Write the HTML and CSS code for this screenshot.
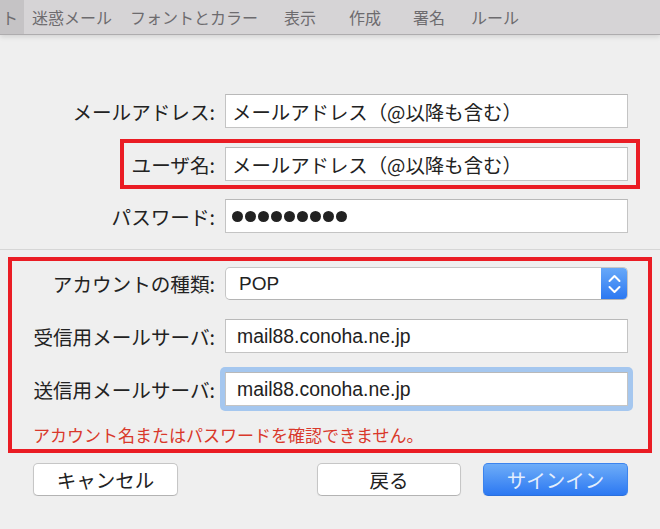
FILE: index.html
```html
<!DOCTYPE html>
<html lang="ja">
<head>
  <meta charset="UTF-8">
  <meta name="viewport" content="width=device-width, initial-scale=1.0">
  <title>アカウントを追加</title>
  <link rel="stylesheet" href="styles.css">
</head>
<body>
  <!-- 環境設定のツールバー（上半分は画面外） -->
  <div class="toolbar">
    <span class="tab tab-cut">ト</span>
    <span class="tab tab-junk">迷惑メール</span>
    <span class="tab tab-font">フォントとカラー</span>
    <span class="tab tab-view">表示</span>
    <span class="tab tab-compose">作成</span>
    <span class="tab tab-sign">署名</span>
    <span class="tab tab-rule">ルール</span>
  </div>

  <form class="account" id="accountForm">
    <div class="row">
      <label class="label" for="email">メールアドレス:</label>
      <input class="field" type="text" id="email" value="メールアドレス（@以降も含む）" readonly>
    </div>

    <div class="mark mark-user">
      <div class="row">
        <label class="label" for="user">ユーザ名:</label>
        <input class="field" type="text" id="user" value="メールアドレス（@以降も含む）" readonly>
      </div>
    </div>

    <div class="row">
      <label class="label">パスワード:</label>
      <div class="field field-dots">
        <span class="dot"></span><span class="dot"></span><span class="dot"></span>
        <span class="dot"></span><span class="dot"></span><span class="dot"></span>
        <span class="dot"></span><span class="dot"></span><span class="dot"></span>
      </div>
    </div>

    <div class="divider"></div>

    <div class="mark mark-server">
      <div class="row">
        <label class="label">アカウントの種類:</label>
        <div class="select">
          <span class="select-value">POP</span>
          <span class="stepper">
            <svg width="27" height="33" viewBox="0 0 27 33">
              <path d="M8.5 14 L13.5 9 L18.5 14" fill="none" stroke="#fff" stroke-width="2" stroke-linecap="round" stroke-linejoin="round"/>
              <path d="M8.5 20 L13.5 25 L18.5 20" fill="none" stroke="#fff" stroke-width="2" stroke-linecap="round" stroke-linejoin="round"/>
            </svg>
          </span>
        </div>
      </div>
      <div class="row row-gap">
        <label class="label" for="incoming">受信用メールサーバ:</label>
        <input class="field field-latin" type="text" id="incoming" value="mail88.conoha.ne.jp" readonly>
      </div>
      <div class="row row-gap">
        <label class="label" for="outgoing">送信用メールサーバ:</label>
        <div class="focus">
          <input class="field field-latin" type="text" id="outgoing" value="mail88.conoha.ne.jp" readonly>
        </div>
      </div>
      <p class="error">アカウント名またはパスワードを確認できません。</p>
    </div>

    <div class="buttons">
      <button type="button" class="btn btn-cancel">キャンセル</button>
      <button type="button" class="btn btn-back">戻る</button>
      <button type="submit" class="btn btn-primary">サインイン</button>
    </div>
  </form>
</body>
</html>
```

FILE: styles.css
```css
/* Estilos generales */
body {
  margin: 0;
  background: #efefef;
  font-family: "Noto Sans CJK JP", sans-serif;
  color: #222;
}

/* Barra de herramientas */
.toolbar {
  display: flex;
  align-items: center;
  height: 34px;
  background: #d6d4d6;
  border-bottom: 1px solid #aeacae;
  box-shadow: 0 2px 5px rgba(0,0,0,0.12);
  font-size: 16px;
  color: #6d6b6e;
}
.tab {
  white-space: nowrap;
  line-height: 34px;
}
.tab-cut {
  width: 22px;
  padding-left: 2px;
  background: #c5c3c5;
}
.tab-junk { margin-left: 8px; }
.tab-font { margin-left: 18px; }
.tab-view { margin-left: 26px; }
.tab-compose { margin-left: 33px; }
.tab-sign { margin-left: 32px; }
.tab-rule { margin-left: 26px; }

/* Formulario */
.account {
  padding-top: 59px;
}
.row {
  display: flex;
  align-items: center;
  height: 34px;
}
.row-gap {
  margin-top: 19px;
}
.label {
  width: 225px;
  flex-shrink: 0;
  box-sizing: border-box;
  padding-right: 10px;
  text-align: right;
  font-size: 19.6px;
  white-space: nowrap;
}
.field {
  width: 403px;
  height: 34px;
  box-sizing: border-box;
  margin: 0;
  border: 1px solid #c4c4c4;
  border-top-color: #b9b9b9;
  border-radius: 0;
  background: #fff;
  padding: 0 6px;
  font: 19.4px "Noto Sans CJK JP", sans-serif;
  color: #222;
  outline: none;
}
.field-latin {
  padding-left: 11px;
  font-family: "Liberation Sans", Arial, sans-serif;
}
.field-dots {
  display: flex;
  align-items: center;
  gap: 2px;
}
.dot {
  width: 11px;
  height: 11px;
  border-radius: 50%;
  background: #222;
}

/* Recuadros rojos */
.mark {
  border: 4px solid #ea1c24;
}
.mark-user {
  width: 520px;
  box-sizing: border-box;
  margin: 11px 0 10px 120px;
  padding: 4px 8px 4px 0;
}
.mark-user .label {
  width: 101px;
}
.divider {
  margin-top: 16px;
  height: 1px;
  background: #d6d6d6;
}
.mark-server {
  margin: 7px 8px 0 8px;
  padding: 5px 20px 4px 0;
}
.mark-server .label {
  width: 213px;
}

/* Selector */
.select {
  display: flex;
  width: 403px;
  height: 33px;
  box-sizing: border-box;
  border: 1px solid #c6c6c6;
  border-bottom-color: #b4b4b4;
  border-radius: 5px;
  background: #fff;
  overflow: hidden;
}
.select-value {
  flex: 1;
  padding-left: 13px;
  font: 19px/31px "Liberation Sans", Arial, sans-serif;
  color: #222;
}
.stepper {
  width: 27px;
  height: 33px;
  margin: -1px -1px 0 0;
  background: linear-gradient(#69aaf9, #2b77f1);
}
.stepper svg {
  display: block;
}

/* Campo con foco */
.focus {
  margin: -5px;
  padding: 5px;
  border-radius: 5px;
  background: #a5c7ef;
  display: flex;
}

.error {
  margin: 19px 0 0;
  padding-left: 21px;
  font-size: 17px;
  line-height: 20px;
  color: #d9382b;
}

/* Botones */
.buttons {
  display: flex;
  margin-top: 10px;
  padding: 0 32px 0 33px;
}
.btn {
  width: 145px;
  height: 33px;
  border: 1px solid #c6c6c6;
  border-bottom-color: #b3b3b3;
  border-radius: 5px;
  background: #fff;
  box-shadow: 0 1px 1px rgba(0,0,0,0.08);
  font: 19.5px "Noto Sans CJK JP", sans-serif;
  color: #222;
  padding: 0;
  cursor: pointer;
}
.btn-back {
  width: 144px;
  margin-left: auto;
}
.btn-primary {
  margin-left: 22px;
  border-color: #3c84ee;
  border-bottom-color: #2a6fdc;
  background: linear-gradient(#6eadf8, #2c78f2);
  color: #e4eefc;
}
```
